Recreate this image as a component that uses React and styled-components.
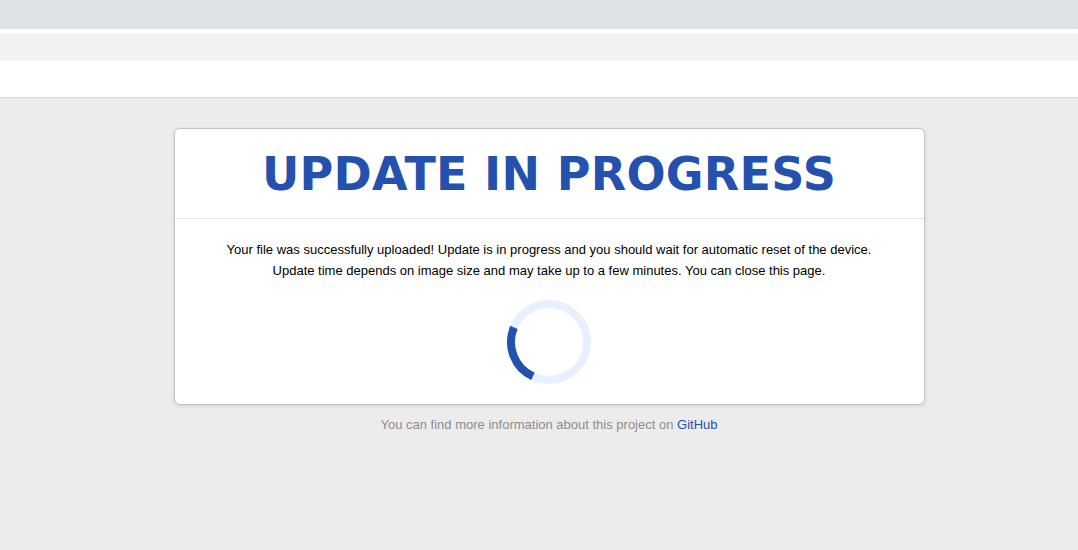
import React from 'react';
import styled, { createGlobalStyle } from 'styled-components';

const GlobalStyle = createGlobalStyle`
	html, body {
		margin: 0;
		padding: 0;
		background: #ececec;
		font-family: "Liberation Sans", Arial, sans-serif;
	}
`;

const Page = styled.div`
	min-height: 550px;
	background: #ececec;
`;

const Bar = styled.div`
	height: ${p => p.$h}px;
	background: ${p => p.$bg};
	border-bottom: ${p => (p.$line ? '1px solid #d9d9d9' : 'none')};
`;

const Main = styled.main`
	display: flex;
	flex-direction: column;
	align-items: center;
	padding: 30px 0 0 20px;
`;

const Card = styled.section`
	width: 749px;
	background: #fff;
	border: 1px solid #c4c4c4;
	border-radius: 6px;
	box-shadow: 0 1px 4px rgba(0, 0, 0, 0.12);
`;

const Header = styled.header`
	height: 89px;
	display: flex;
	align-items: center;
	justify-content: center;
	border-bottom: 1px solid #e4e4e4;
`;

const Title = styled.h1`
	margin: 0;
	font-family: "DejaVu Sans", Verdana, sans-serif;
	font-weight: bold;
	font-size: 46px;
	color: #2351ad;
	letter-spacing: 0.3px;
`;

const Body = styled.div`
	display: flex;
	flex-direction: column;
	align-items: center;
	padding: 20px 0 19px;
`;

const Message = styled.p`
	margin: 0 0 18px;
	font-size: 13px;
	line-height: 21px;
	color: #000;
	text-align: center;
`;

const Spinner = styled.svg`
	display: block;
	width: 86px;
	height: 86px;
`;

const Footer = styled.p`
	margin: 12px 0 0;
	font-size: 13px;
	color: #8c8c8c;
`;

const Link = styled.a`
	color: #2351ad;
	text-decoration: none;
`;

export default function App() {
	const r = 38;
	const c = 2 * Math.PI * r;
	return (
		<Page>
			<GlobalStyle />
			<Bar $h={29} $bg="#dee2e6" />
			<Bar $h={4} $bg="#ffffff" />
			<Bar $h={28} $bg="#f1f2f4" />
			<Bar $h={36} $bg="#ffffff" $line />
			<Main>
				<Card>
					<Header>
						<Title>UPDATE IN PROGRESS</Title>
					</Header>
					<Body>
						<Message>
							Your file was successfully uploaded! Update is in progress and you should wait for automatic reset of the device.
							<br />
							Update time depends on image size and may take up to a few minutes. You can close this page.
						</Message>
						<Spinner viewBox="0 0 86 86">
							<circle cx="43" cy="43" r={r} fill="none" stroke="#e8f0fd" strokeWidth="8" />
							<circle
								cx="43"
								cy="43"
								r={r}
								fill="none"
								stroke="#2351ad"
								strokeWidth="8"
								strokeDasharray={`${c * 0.243} ${c}`}
								transform="rotate(115 43 43)"
							/>
						</Spinner>
					</Body>
				</Card>
				<Footer>
					You can find more information about this project on <Link href="#">GitHub</Link>
				</Footer>
			</Main>
		</Page>
	);
}
